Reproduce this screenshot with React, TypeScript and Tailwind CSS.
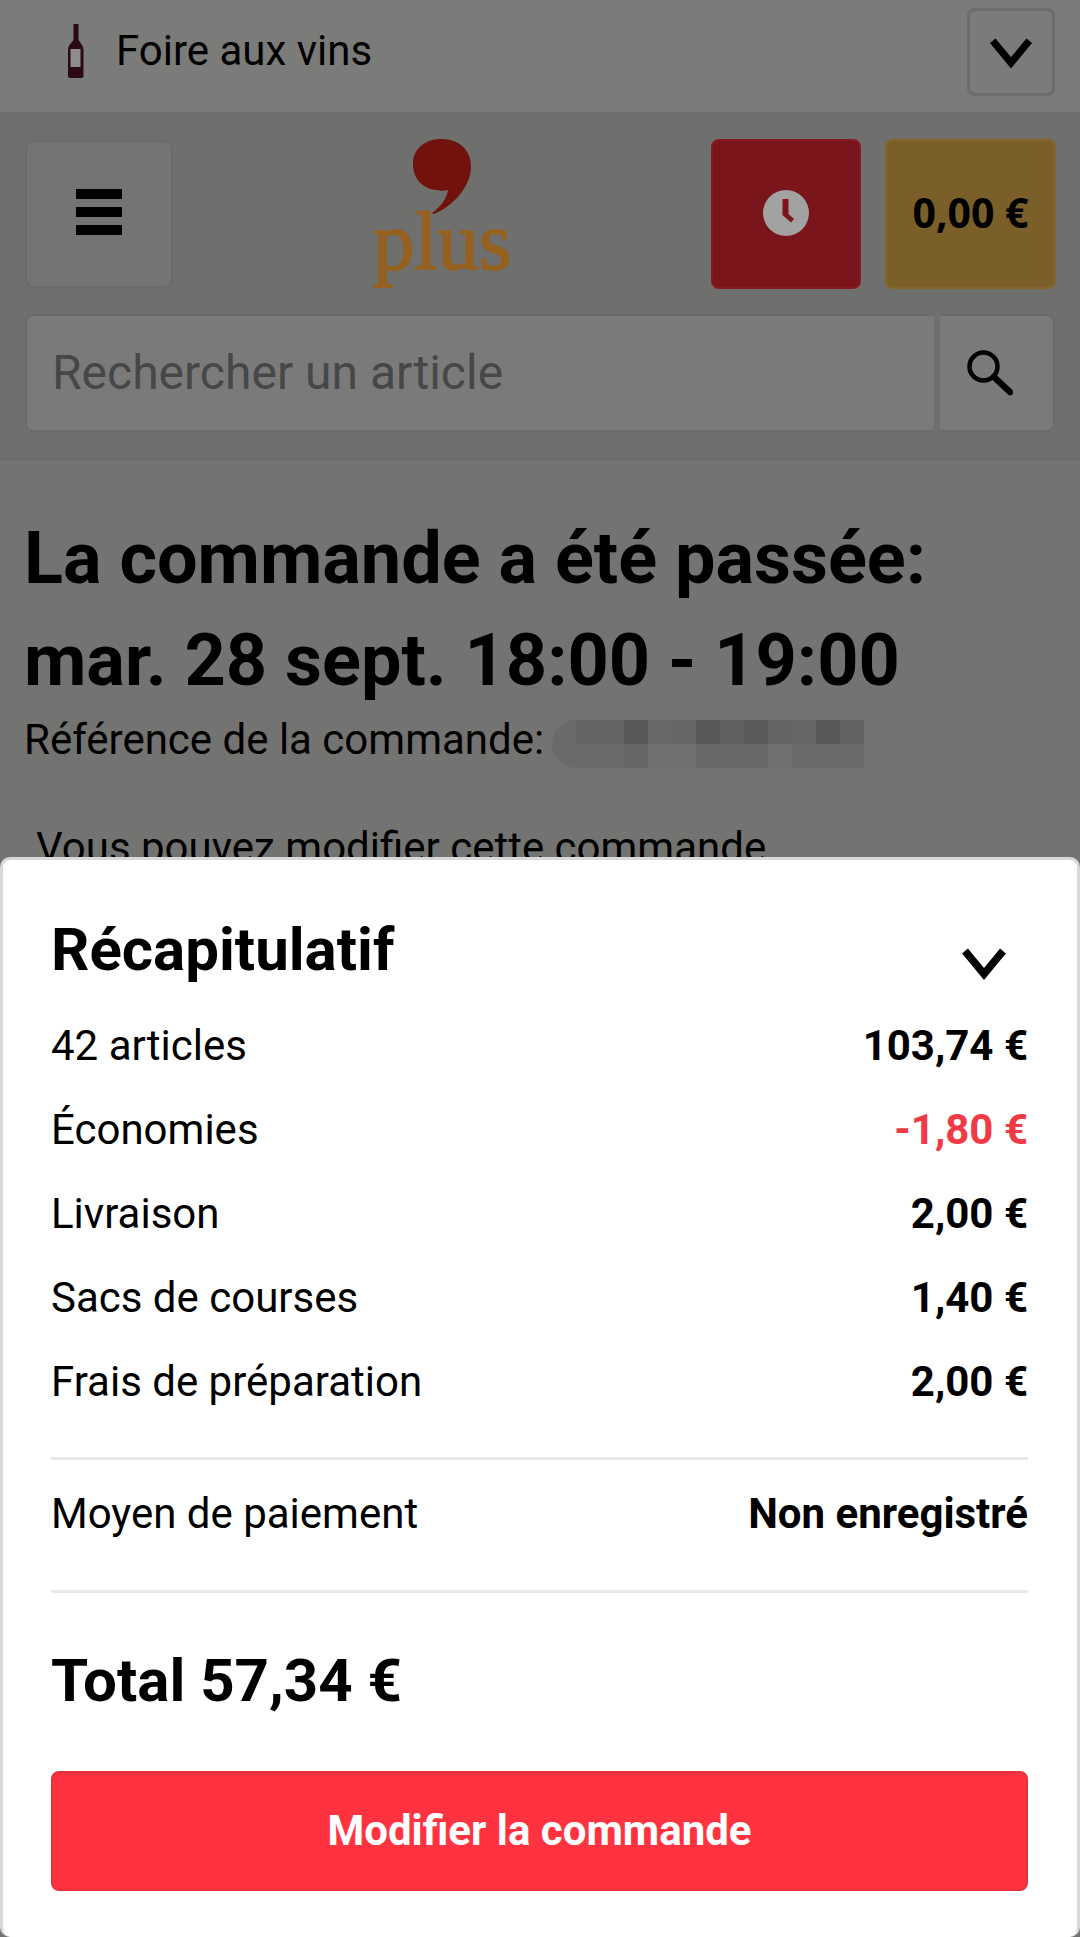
const rows = [
  { label: '42 articles', value: '103,74 €', valueClass: 'text-black' },
  { label: 'Économies', value: '-1,80 €', valueClass: 'text-[#f03a46]' },
  { label: 'Livraison', value: '2,00 €', valueClass: 'text-black' },
  { label: 'Sacs de courses', value: '1,40 €', valueClass: 'text-black' },
  { label: 'Frais de préparation', value: '2,00 €', valueClass: 'text-black' },
];

const redaction = [
  'bg-[#656565]', 'bg-[#656565]', 'bg-[#595959]', 'bg-[#696969]', 'bg-[#666666]', 'bg-[#585858]',
  'bg-[#606060]', 'bg-[#5a5a5a]', 'bg-[#656565]', 'bg-[#666666]', 'bg-[#595959]', 'bg-[#626262]',
  'bg-[#6a6a6a]', 'bg-[#6a6a6a]', 'bg-[#676767]', 'bg-[#707070]', 'bg-[#707070]', 'bg-[#696969]',
  'bg-[#696969]', 'bg-[#696969]', 'bg-[#707070]', 'bg-[#6a6a6a]', 'bg-[#6a6a6a]', 'bg-[#6a6a6a]',
];

function Chevron({ className }: { className: string }) {
  return (
    <svg viewBox="0 0 52 38" fill="none" stroke="#000" strokeWidth="7.500" className={className}>
      <path d="M7 7l19 23L45 7" />
    </svg>
  );
}

function Bottle() {
  return (
    <svg width="16" height="54" viewBox="0 0 16 54" className="shrink-0">
      <path d="M5.500 0h5v15c0 3 5 5 5 11v26c0 1-1 2-2 2H2c-1 0-2-1-2-2V26c0-6 5.500-8 5.500-11z" fill="#2a0a16" />
      <rect x="2.500" y="25" width="10" height="18" fill="#8e8c8c" />
    </svg>
  );
}

function Clock() {
  return (
    <svg width="46" height="46" viewBox="0 0 46 46">
      <circle cx="23" cy="23" r="23" fill="#a2a2a2" />
      <path d="M19.500 9h6v15l5.500 5-3 3.500-8.500-7.500z" fill="#7a161b" />
    </svg>
  );
}

function Search() {
  return (
    <svg width="46" height="46" viewBox="0 0 46 46" fill="none" stroke="#000">
      <circle cx="16.500" cy="16.500" r="14" strokeWidth="4.500" />
      <path d="M27 27l16 15" strokeWidth="6.500" strokeLinecap="round" />
    </svg>
  );
}

function Logo() {
  return (
    <div className="relative ml-[200px] h-[150px] w-[140px] shrink-0">
      <svg width="58" height="75" viewBox="0 0 58 75" className="absolute left-[40px] top-0">
        <path d="M28 0C46 0 58 11 58 27C58 48 40 67 21 75L19 74C27 68 34 60 35 51C31 52 27 52 24 51C9 50 0 39 0 25C0 10 12 0 28 0z" fill="#72120c" />
      </svg>
      <span className="absolute left-0 top-[52px] font-['Liberation_Serif',serif] text-[83px] leading-[100px] text-[#96601f] [-webkit-text-stroke:1.500px_#96601f]">
        plus
      </span>
    </div>
  );
}

export default function App() {
  return (
    <div className="relative h-[1937px] w-[1080px] overflow-hidden bg-[#737371] font-['Roboto',sans-serif] text-black">
      <div className="flex h-[112px] items-start justify-between bg-[#7b7b79] pl-[68px] pr-[25px]">
        <div className="mt-[24px] flex items-center gap-[32px]">
          <Bottle />
          <span className="text-[42px] leading-[48px]">Foire aux vins</span>
        </div>
        <button className="mt-[8px] flex h-[88px] w-[88px] items-center justify-center rounded-[8px] border-[3px] border-[#6c6c6b] bg-[#7b7b79]">
          <Chevron className="h-[36.500px] w-[50px]" />
        </button>
      </div>

      <header className="border-b-[2px] border-[#6b6b69] bg-[#6f6f6d] pb-[26px] pl-[25px] pr-[24px] pt-[27px]">
        <div className="flex h-[150px] items-center">
          <button className="flex h-[148px] w-[148px] shrink-0 flex-col items-center justify-center gap-[8px] rounded-[8px] border-[2px] border-[#6a6a68] bg-[#747473] pb-[4px]">
            <span className="h-[10px] w-[46px] bg-black" />
            <span className="h-[10px] w-[46px] bg-black" />
            <span className="h-[10px] w-[46px] bg-black" />
          </button>
          <Logo />
          <button className="ml-auto flex h-[150px] w-[150px] items-center justify-center rounded-[8px] border-[2px] border-[#861a20] bg-[#7a161b] pb-[2px]">
            <Clock />
          </button>
          <button className="ml-[24px] flex h-[150px] w-[171px] items-center justify-center rounded-[8px] border-[2px] border-[#856629] bg-[#7b5f29] pb-[4px] font-['Open_Sans',sans-serif] text-[41px] font-bold leading-[48px]">
            0,00 €
          </button>
        </div>
        <div className="mr-[1px] mt-[25px] flex h-[118px]">
          <div className="flex flex-1 items-center rounded-l-[8px] border-[2px] border-r-0 border-[#6b6b69] bg-[#7a7a7a] pl-[25px] text-[48px] leading-[56px] text-[#474747]">
            Rechercher un article
          </div>
          <button className="ml-[6px] flex w-[115px] items-center justify-center rounded-r-[8px] border-[2px] border-l-0 border-[#6b6b69] bg-[#7a7a7a] pr-[14px]">
            <Search />
          </button>
        </div>
      </header>

      <main className="px-[24px] pt-[48px]">
        <h1 className="text-[72px] font-bold leading-[102px]">
          La commande a été passée:
          <br />
          mar. 28 sept. 18:00 - 19:00
        </h1>
        <div className="mt-[3px] flex h-[50px] items-center">
          <span className="text-[42px] leading-[50px]">Référence de la commande:</span>
          <div className="relative ml-[32px] h-[48px] w-[288px] translate-y-[4px]">
            <div className="absolute -left-[24px] top-0 h-[48px] w-[60px] rounded-l-[24px] bg-[#6a6a6a]" />
            <div className="relative grid h-full grid-cols-12 grid-rows-2">
              {redaction.map((color, i) => (
                <div key={i} className={color} />
              ))}
            </div>
          </div>
        </div>
        <p className="ml-[12px] mt-[58px] text-[42px] leading-[50px]">Vous pouvez modifier cette commande</p>
      </main>

      <section className="absolute bottom-0 left-0 right-0 top-[857px] rounded-[10px] border-[3px] border-b-0 border-[#d8d8d6] bg-white pl-[48px] pr-[49px]">
        <div className="flex h-[144px] items-start justify-between">
          <h2 className="mt-[55px] text-[60px] font-bold leading-[70px]">Récapitulatif</h2>
          <Chevron className="mr-[18px] mt-[84px] h-[38px] w-[52px]" />
        </div>
        {rows.map((row) => (
          <div key={row.label} className="flex h-[84px] items-center justify-between text-[42px] leading-[48px]">
            <span>{row.label}</span>
            <span className={`font-bold ${row.valueClass}`}>{row.value}</span>
          </div>
        ))}
        <div className="mt-[33px] flex items-start justify-between border-y-[3px] border-[#e8e8e8] pb-[52px] pt-[30px] text-[42px] leading-[48px]">
          <span>Moyen de paiement</span>
          <span className="font-bold">Non enregistré</span>
        </div>
        <div className="mt-[50px] text-[60px] font-bold leading-[76px]">Total 57,34 €</div>
        <button className="mt-[52px] flex h-[120px] w-full items-center justify-center rounded-[8px] border-[2px] border-[#e8303c] bg-[#ff3340] text-[42px] font-bold leading-[48px] text-white">
          Modifier la commande
        </button>
      </section>
    </div>
  );
}
